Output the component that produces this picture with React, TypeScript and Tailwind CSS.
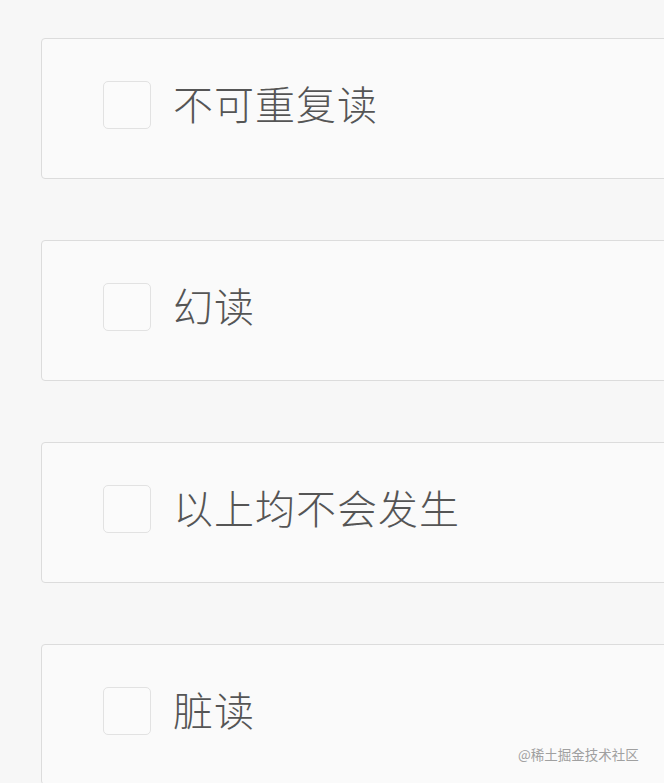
const options = ["不可重复读", "幻读", "以上均不会发生", "脏读"];

// One answer row: an empty square checkbox and the option label
function OptionCard({ label }: { label: string }) {
  return (
    <div className="shrink-0 w-[680px] h-[141px] bg-[#fafafa] border-[1.5px] border-[#dcdcdc] rounded-[4px] pl-[61px] pt-[42px]">
      <div className="flex items-center gap-[22px]">
        <span className="w-[48px] h-[48px] rounded-[5px] border-[1.5px] border-[#e2e2e2] bg-[#fbfbfb]" />
        <span className="-mt-[4px] text-[40px] leading-none text-[#555555] tracking-[1px] font-['Noto_Sans_CJK_SC',sans-serif] font-light">
          {label}
        </span>
      </div>
    </div>
  );
}

export default function App() {
  return (
    <div className="relative w-full h-[783px] overflow-hidden bg-[#f7f7f7]">
      <div className="flex flex-col gap-[61px] pt-[38px] pl-[41px]">
        {options.map((o) => (
          <OptionCard key={o} label={o} />
        ))}
      </div>

      {/* watermark */}
      <span className="absolute left-[518px] top-[744px] text-[13.5px] leading-[20px] text-[#a0a0a0] font-['Noto_Sans_CJK_SC',sans-serif]">
        @稀土掘金技术社区
      </span>
    </div>
  );
}
